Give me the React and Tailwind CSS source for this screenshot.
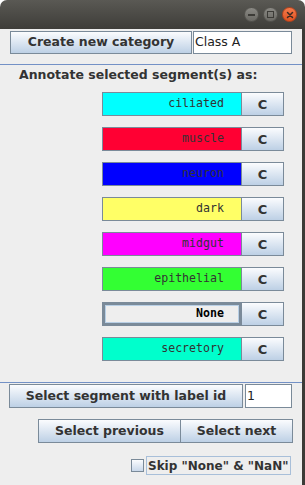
import React from 'react'

const btn =
  'flex items-center justify-center whitespace-nowrap border border-[#7a8a99] bg-gradient-to-b from-[#fbfcfe] to-[#bdd0e5] font-bold text-[#333333] text-[12.5px] leading-none'

const labels = [
  { name: 'ciliated', bg: 'bg-[#00ffff]' },
  { name: 'muscle', bg: 'bg-[#ff0033]' },
  { name: 'neuron', bg: 'bg-[#0000ff]' },
  { name: 'dark', bg: 'bg-[#ffff66]' },
  { name: 'midgut', bg: 'bg-[#ff00ff]' },
  { name: 'epithelial', bg: 'bg-[#33ff33]' },
  { name: 'None', bg: 'bg-[#eeeeee]', none: true },
  { name: 'secretory', bg: 'bg-[#00ffcc]' },
]

function TitleBar() {
  return (
    <div className="flex h-[29px] items-center justify-end gap-[4px] rounded-t-[7px] bg-gradient-to-b from-[#5a5954] to-[#3e3d39] pr-[8px]">
      <div className="flex h-[15px] w-[15px] items-center justify-center rounded-full border border-[#55544f] bg-gradient-to-b from-[#8a8984] to-[#6a6964]">
        <div className="h-[2px] w-[7px] bg-[#3c3b37]" />
      </div>
      <div className="flex h-[15px] w-[15px] items-center justify-center rounded-full border border-[#55544f] bg-gradient-to-b from-[#8a8984] to-[#6a6964]">
        <div className="h-[7px] w-[7px] border-[1.5px] border-[#3c3b37]" />
      </div>
      <div className="flex h-[15px] w-[15px] items-center justify-center rounded-full border border-[#b5421c] bg-gradient-to-b from-[#f47a4a] to-[#e0521f]">
        <svg width="8" height="8" viewBox="0 0 8 8">
          <path d="M1.5 1.5 L6.5 6.5 M6.5 1.5 L1.5 6.5" stroke="#3c2a22" strokeWidth="1.5" strokeLinecap="round" />
        </svg>
      </div>
    </div>
  )
}

function LabelRow({ name, bg, none }) {
  return (
    <div className="flex h-[24px] pl-[102px]">
      {none ? (
        <div className="flex w-[140px] border-[3px] border-[#7a8a99] bg-[#eeeeee]">
          <div className="flex flex-1 items-center justify-end border border-[#b8cfe5] pr-[14px] font-['DejaVu_Sans_Mono',monospace] text-[11.6px] font-bold text-black">
            {name}
          </div>
        </div>
      ) : (
        <div
          className={
            'flex w-[140px] items-center justify-end border border-[#7a8a99] pr-[17px] font-["DejaVu_Sans_Mono",monospace] text-[11.6px] text-[#333333] ' +
            bg
          }
        >
          {name}
        </div>
      )}
      <div className={btn + ' w-[42px] border-l-0 text-[13px]'}>C</div>
    </div>
  )
}

export default function App() {
  return (
    <div className="flex h-[485px] w-[305px] flex-col bg-white font-['DejaVu_Sans',sans-serif]">
      <TitleBar />
      <div className="flex flex-1 flex-col border-r-[3px] border-[#3c3b37] bg-[#eeeeee]">
        <div className="mt-[2px] flex h-[23px] pl-[10px]">
          <div className={btn + ' w-[182px]'}>Create new category</div>
          <div className="ml-[1px] flex w-[99px] items-center border border-[#7a8a99] bg-white pl-[1px] text-[12.5px] text-[#222222]">
            Class A
          </div>
        </div>
        <div className="mt-[10px] h-[1px] bg-[#7391c6]" />
        <div className="mt-[2px] whitespace-nowrap pl-[19px] text-[12.5px] font-bold leading-[15px] text-[#333333]">
          Annotate selected segment(s) as:
        </div>
        <div className="mt-[10px] flex flex-col gap-[11px]">
          {labels.map((l) => (
            <LabelRow key={l.name} {...l} />
          ))}
        </div>
        <div className="mt-[21px] h-[1px] bg-[#7391c6]" />
        <div className="mt-[1px] flex h-[24px] pl-[9px]">
          <div className={btn + ' w-[234px]'}>Select segment with label id</div>
          <div className="ml-[2px] flex w-[47px] items-center border border-[#7a8a99] bg-white pl-[1px] text-[12.5px] text-[#222222]">
            1
          </div>
        </div>
        <div className="mt-[11px] flex h-[24px] pl-[38px]">
          <div className={btn + ' w-[143px]'}>Select previous</div>
          <div className={btn + ' w-[112px] border-l-0'}>Select next</div>
        </div>
        <div className="mt-[13px] flex h-[19px] items-center pl-[131px]">
          <div className="h-[13px] w-[13px] border border-[#7a8a99] bg-gradient-to-b from-[#fbfcfe] to-[#c9d8ea]" />
          <div className="ml-[2px] flex h-[19px] w-[145px] items-center whitespace-nowrap border border-[#a8bfd9] pl-[1px] text-[12px] font-bold text-[#333333]">
            Skip "None" &amp; "NaN"
          </div>
        </div>
      </div>
    </div>
  )
}
